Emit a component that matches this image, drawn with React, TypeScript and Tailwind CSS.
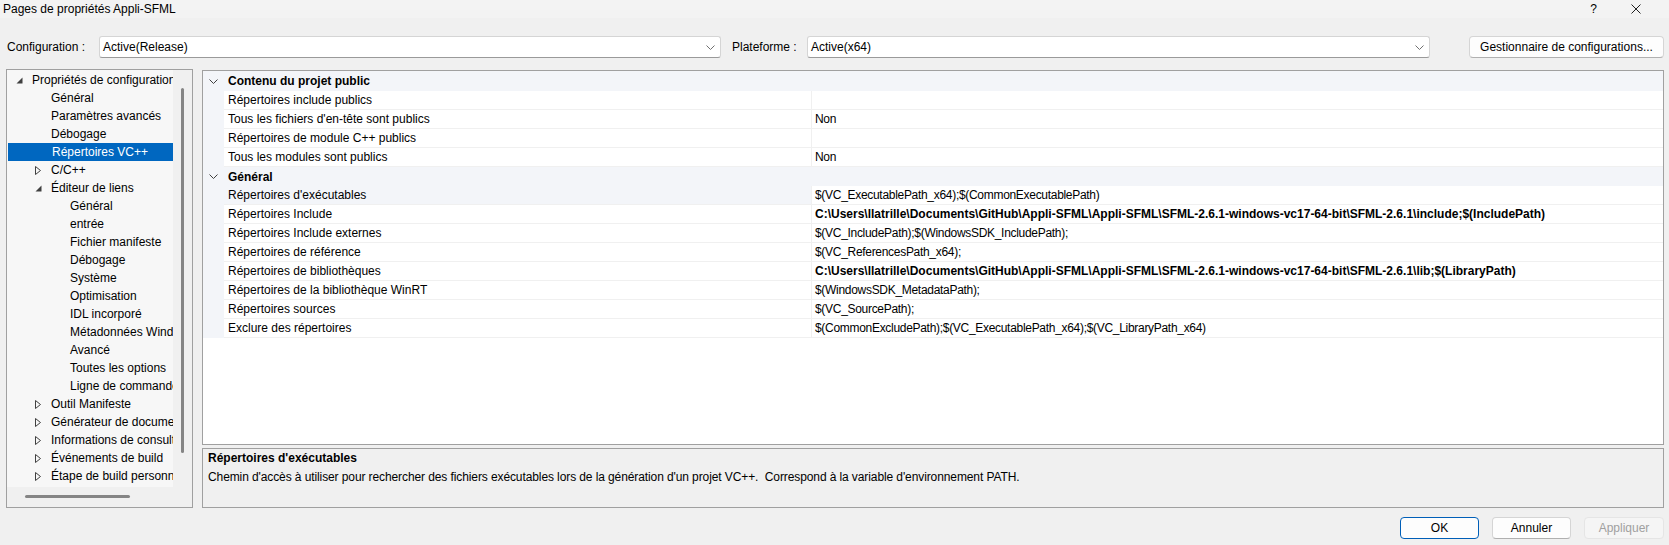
import React from "react";

type TreeItem = {
  label: string;
  level: number;
  icon?: "open" | "closed";
  selected?: boolean;
};

const tree: TreeItem[] = [
  { label: "Propriétés de configuration", level: 0, icon: "open" },
  { label: "Général", level: 1 },
  { label: "Paramètres avancés", level: 1 },
  { label: "Débogage", level: 1 },
  { label: "Répertoires VC++", level: 1, selected: true },
  { label: "C/C++", level: 1, icon: "closed" },
  { label: "Éditeur de liens", level: 1, icon: "open" },
  { label: "Général", level: 2 },
  { label: "entrée", level: 2 },
  { label: "Fichier manifeste", level: 2 },
  { label: "Débogage", level: 2 },
  { label: "Système", level: 2 },
  { label: "Optimisation", level: 2 },
  { label: "IDL incorporé", level: 2 },
  { label: "Métadonnées Windows", level: 2 },
  { label: "Avancé", level: 2 },
  { label: "Toutes les options", level: 2 },
  { label: "Ligne de commande", level: 2 },
  { label: "Outil Manifeste", level: 1, icon: "closed" },
  { label: "Générateur de documents XML", level: 1, icon: "closed" },
  { label: "Informations de consultation", level: 1, icon: "closed" },
  { label: "Événements de build", level: 1, icon: "closed" },
  { label: "Étape de build personnalisée", level: 1, icon: "closed" },
];

type Prop = { name: string; value: string; bold?: boolean; selected?: boolean };

const sections: { title: string; rows: Prop[] }[] = [
  {
    title: "Contenu du projet public",
    rows: [
      { name: "Répertoires include publics", value: "" },
      { name: "Tous les fichiers d'en-tête sont publics", value: "Non" },
      { name: "Répertoires de module C++ publics", value: "" },
      { name: "Tous les modules sont publics", value: "Non" },
    ],
  },
  {
    title: "Général",
    rows: [
      {
        name: "Répertoires d'exécutables",
        value: "$(VC_ExecutablePath_x64);$(CommonExecutablePath)",
        selected: true,
      },
      {
        name: "Répertoires Include",
        value:
          "C:\\Users\\llatrille\\Documents\\GitHub\\Appli-SFML\\Appli-SFML\\SFML-2.6.1-windows-vc17-64-bit\\SFML-2.6.1\\include;$(IncludePath)",
        bold: true,
      },
      { name: "Répertoires Include externes", value: "$(VC_IncludePath);$(WindowsSDK_IncludePath);" },
      { name: "Répertoires de référence", value: "$(VC_ReferencesPath_x64);" },
      {
        name: "Répertoires de bibliothèques",
        value:
          "C:\\Users\\llatrille\\Documents\\GitHub\\Appli-SFML\\Appli-SFML\\SFML-2.6.1-windows-vc17-64-bit\\SFML-2.6.1\\lib;$(LibraryPath)",
        bold: true,
      },
      { name: "Répertoires de la bibliothèque WinRT", value: "$(WindowsSDK_MetadataPath);" },
      { name: "Répertoires sources", value: "$(VC_SourcePath);" },
      {
        name: "Exclure des répertoires",
        value: "$(CommonExcludePath);$(VC_ExecutablePath_x64);$(VC_LibraryPath_x64)",
      },
    ],
  },
];

const Chevron = ({ className }: { className?: string }) => (
  <svg width="9" height="5" viewBox="0 0 9 5" className={className}>
    <path d="M0.5 0.5 L4.5 4.5 L8.5 0.5" fill="none" stroke="currentColor" strokeWidth="1" />
  </svg>
);

const Combo = ({ value, width }: { value: string; width: string }) => (
  <div
    className={`${width} h-[22px] bg-white border border-[#d5d5d5] border-b-[#9a9a9a] rounded-[3px] flex items-center justify-between pl-[3px] pr-[5px]`}
  >
    <span>{value}</span>
    <Chevron className="text-[#707070]" />
  </div>
);

const TreeIcon = ({ kind }: { kind?: "open" | "closed" }) => {
  if (kind === "open")
    return (
      <svg width="7" height="7" viewBox="0 0 7 7">
        <path d="M6.5 0.5 L6.5 6.5 L0.5 6.5 Z" fill="#404040" />
      </svg>
    );
  if (kind === "closed")
    return (
      <svg width="6" height="9" viewBox="0 0 6 9">
        <path d="M0.5 0.5 L5.5 4.5 L0.5 8.5 Z" fill="none" stroke="#404040" strokeWidth="1" />
      </svg>
    );
  return null;
};

const indent: Record<number, string> = { 0: "pl-[5px]", 1: "pl-[24px]", 2: "pl-[43px]" };

const Tree = () => (
  <div className="w-[187px] h-full border border-[#a0a0a0] flex flex-col">
    <div className="flex h-[417px]">
      <div className="w-[166px] h-full bg-[#f7f7f7] overflow-hidden pt-px">
        {tree.map((item, i) => (
          <div
            key={i}
            className={`h-[18px] flex items-center whitespace-nowrap ${indent[item.level]} ${
              item.selected ? "bg-[#0067c0] text-white ml-px" : ""
            }`}
          >
            <span className="w-[14px] flex justify-center shrink-0">
              <TreeIcon kind={item.icon} />
            </span>
            <span className="ml-[6px]">{item.label}</span>
          </div>
        ))}
      </div>
      <div className="flex-1 pt-[18px] pl-[8px]">
        <div className="w-[3px] h-[365px] rounded-full bg-[#858585]" />
      </div>
    </div>
    <div className="h-[20px] pt-[8px] pl-[18px]">
      <div className="w-[105px] h-[3px] rounded-full bg-[#858585]" />
    </div>
  </div>
);

const Grid = () => (
  <div className="h-[376px] bg-white border border-[#a0a0a0] overflow-hidden">
    {sections.map((s, si) => (
      <div key={si}>
        <div
          className={`${si === 0 ? "h-[20px]" : "h-[19px]"} bg-[#f3f5f9] flex items-center`}
        >
          <span className="w-[21px] flex justify-center">
            <Chevron className="text-[#404040]" />
          </span>
          <span className="pl-[4px] font-bold">{s.title}</span>
        </div>
        {s.rows.map((r, ri) => (
          <div key={ri} className="h-[19px] flex">
            <div className="w-[21px] bg-[#f3f5f9]" />
            <div className="flex-1 flex border-b border-[#f0f0f0]">
              <div
                className={`w-[588px] pl-[4px] leading-[18px] border-r border-[#f0f0f0] ${
                  r.selected ? "bg-[#f3f5f9]" : ""
                }`}
              >
                {r.name}
              </div>
              <div
                className={`flex-1 pl-[3px] leading-[18px] whitespace-nowrap ${
                  r.bold ? "font-bold" : "tracking-[-0.3px]"
                }`}
              >
                {r.value}
              </div>
            </div>
          </div>
        ))}
      </div>
    ))}
  </div>
);

export default function App() {
  return (
    <div className="w-[1669px] h-[545px] bg-[#f0f0f0] text-black text-[12px] font-['Liberation_Sans',Arial,sans-serif] flex flex-col overflow-hidden">
      <div className="h-[18px] flex items-center justify-between pl-[3px] pr-[28px] bg-[#f3f3f3]">
        <span>Pages de propriétés Appli-SFML</span>
        <div className="flex items-center gap-[34px]">
          <span className="text-[12px]">?</span>
          <svg width="10" height="10" viewBox="0 0 10 10">
            <path d="M0.5 0.5 L9.5 9.5 M9.5 0.5 L0.5 9.5" stroke="#202020" strokeWidth="1" />
          </svg>
        </div>
      </div>

      <div className="mt-[17px] h-[24px] flex items-center pl-[7px]">
        <span className="w-[92px]">Configuration :</span>
        <Combo value="Active(Release)" width="w-[622px]" />
        <span className="ml-[11px] w-[75px]">Plateforme :</span>
        <Combo value="Active(x64)" width="w-[623px]" />
        <button className="ml-[39px] w-[195px] h-[22px] bg-[#fdfdfd] border border-[#d5d5d5] border-b-[#b0b0b0] rounded-[4px]">
          Gestionnaire de configurations...
        </button>
      </div>

      <div className="mt-[10px] h-[439px] flex pl-[6px] pr-[5px]">
        <Tree />
        <div className="ml-[9px] flex-1 flex flex-col pt-px">
          <Grid />
          <div className="mt-[3px] h-[60px] border border-[#a0a0a0] pl-[5px] leading-[19px]">
            <div className="font-bold">Répertoires d'exécutables</div>
            <div className="whitespace-pre tracking-[-0.1px]">
              {
                "Chemin d'accès à utiliser pour rechercher des fichiers exécutables lors de la génération d'un projet VC++.  Correspond à la variable d'environnement PATH."
              }
            </div>
          </div>
        </div>
      </div>

      <div className="mt-[9px] flex justify-end pr-[5px] gap-[13px]">
        <button className="w-[79px] h-[22px] bg-[#fdfdfd] border border-[#005fb8] rounded-[4px]">OK</button>
        <button className="w-[79px] h-[22px] bg-[#fdfdfd] border border-[#d5d5d5] border-b-[#b0b0b0] rounded-[4px]">
          Annuler
        </button>
        <button className="w-[80px] h-[22px] bg-[#f5f5f5] border border-[#e5e5e5] rounded-[4px] text-[#a0a0a0]">
          Appliquer
        </button>
      </div>
    </div>
  );
}
